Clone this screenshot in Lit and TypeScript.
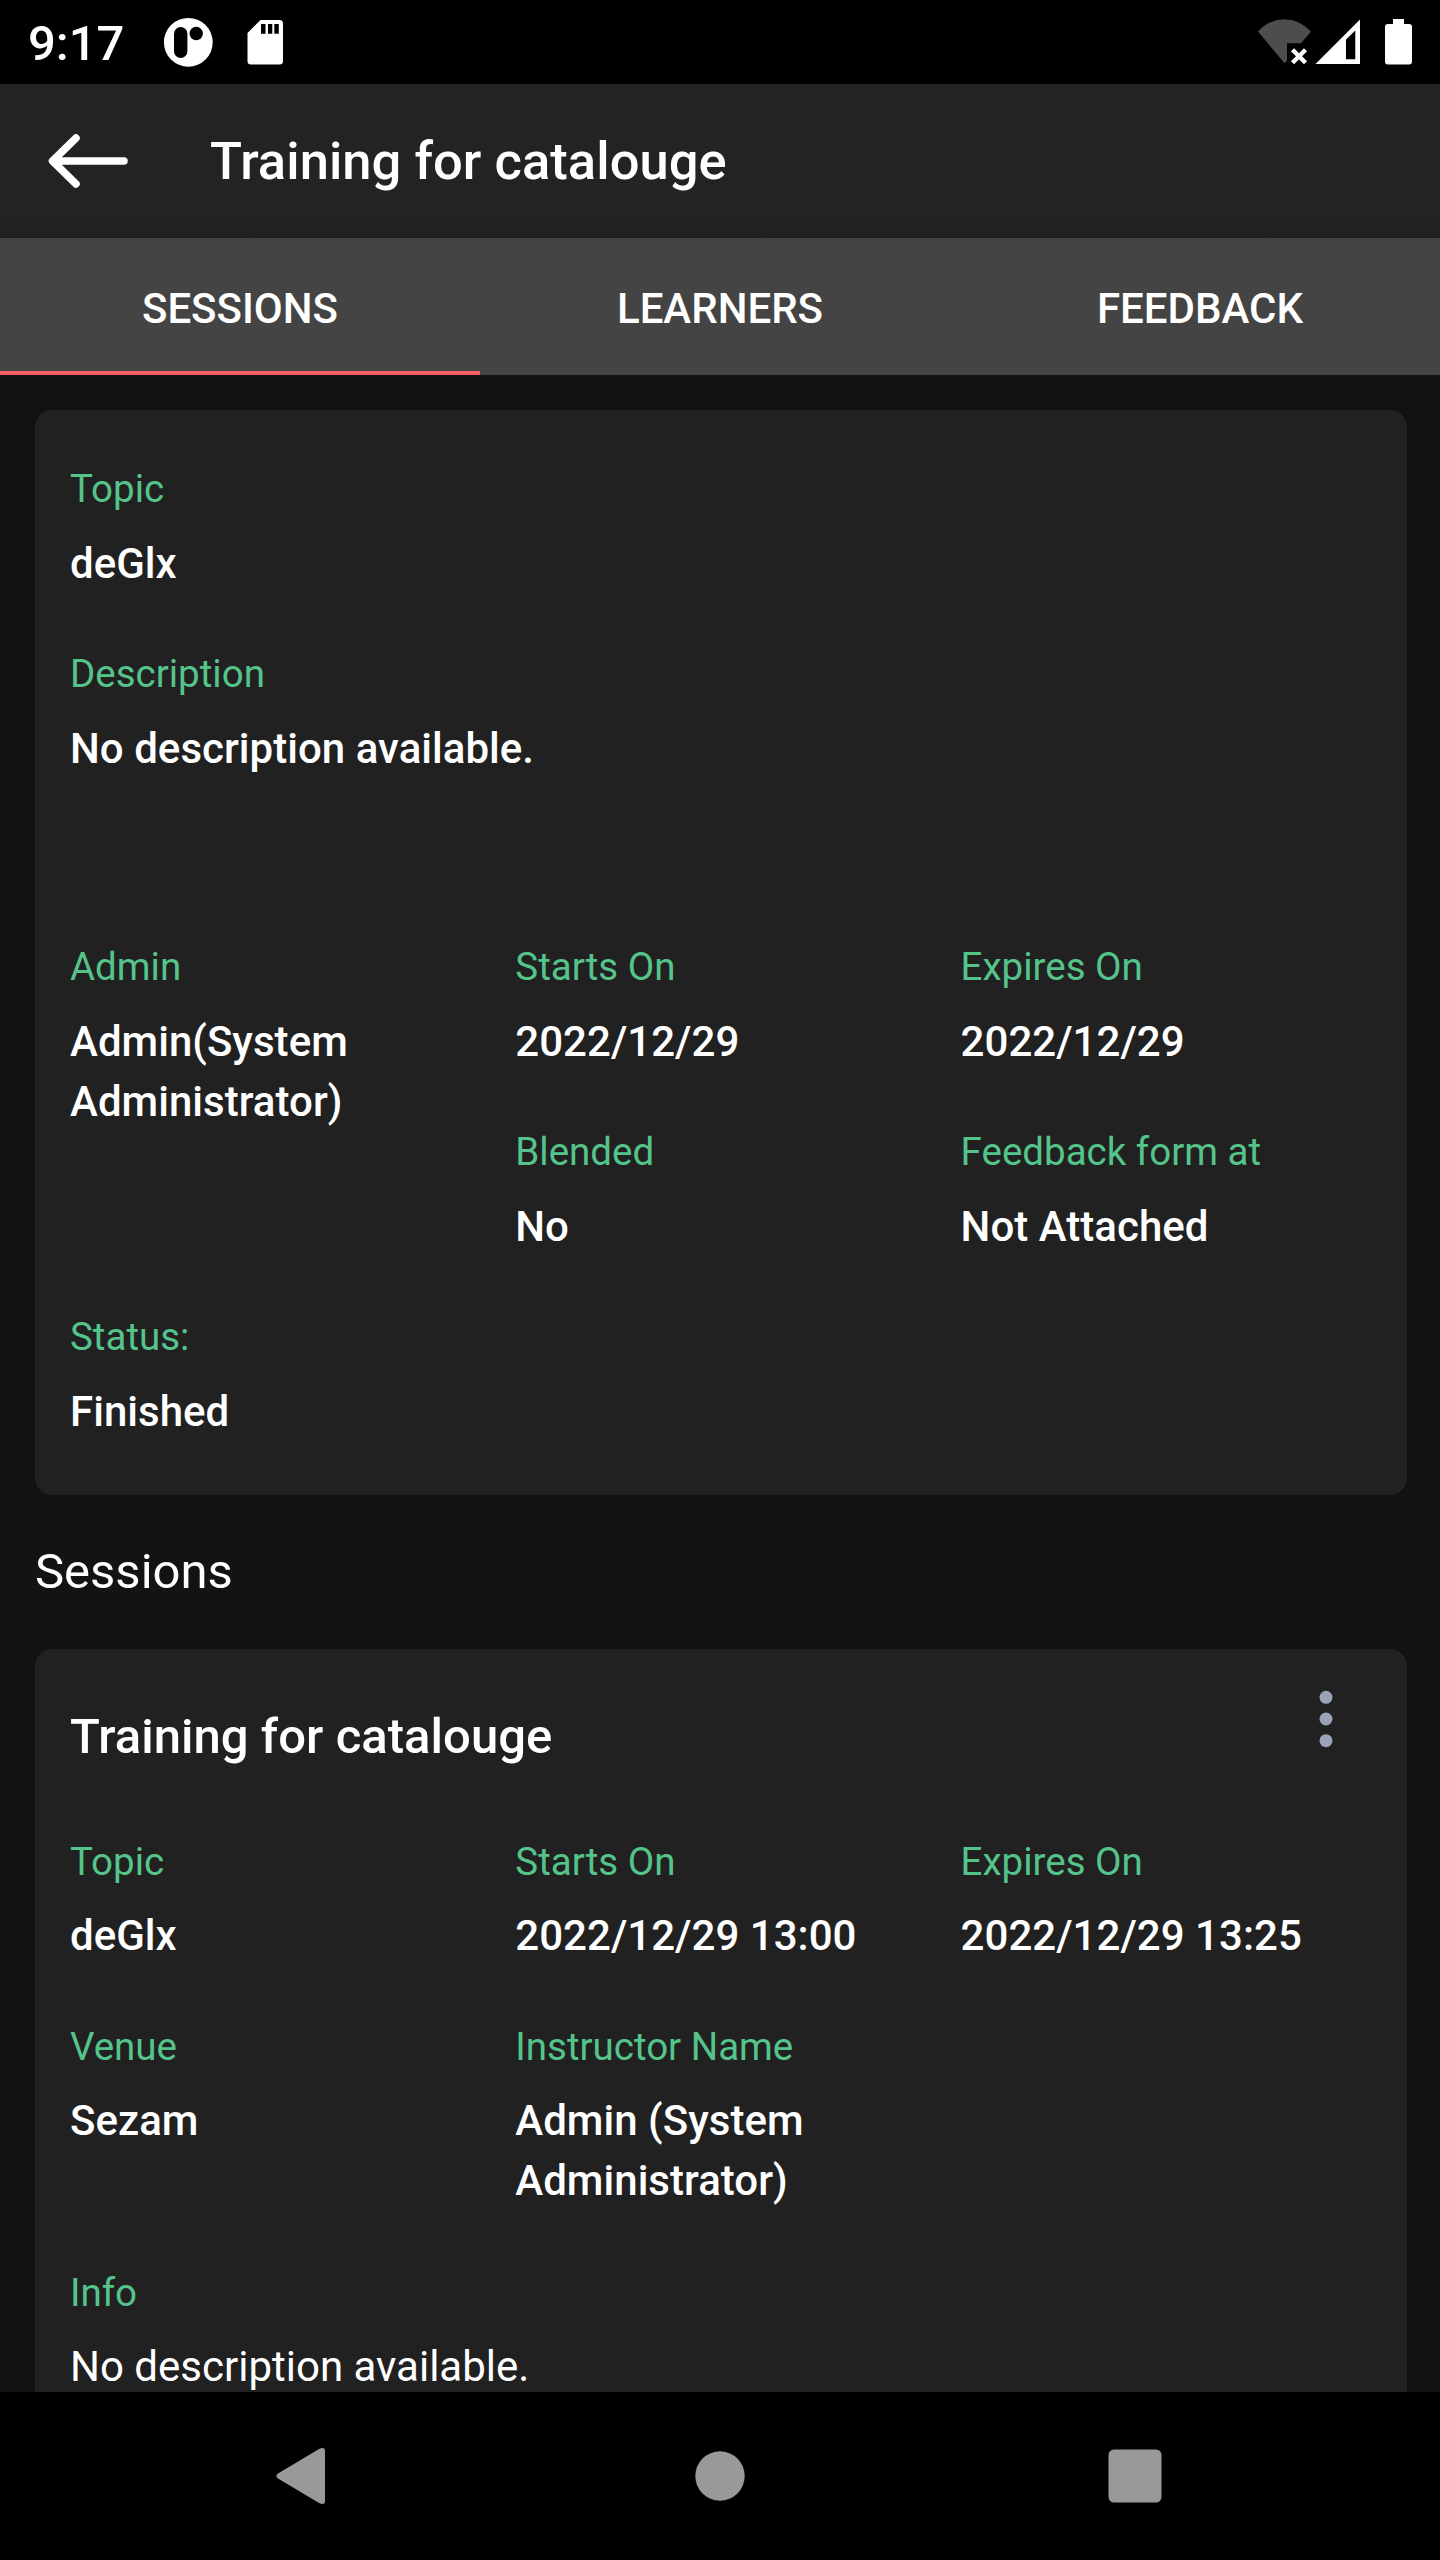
import { LitElement, html, css } from "lit";
import { customElement, property } from "lit/decorators.js";

@customElement("info-field")
class InfoField extends LitElement {
  @property() label = "";
  @property() value = "";
  @property({ type: Boolean, reflect: true }) plain = false;

  static styles = css`
    :host { display: block; padding-bottom: calc(65px - var(--field-gap, 14px)); }
    .label { color: #55c48b; font-size: 38.5px; line-height: 60px; white-space: nowrap; }
    .value { color: #fff; font-size: 42px; line-height: 60px; font-weight: 500; letter-spacing: 0.03px; margin-top: var(--field-gap, 14px); }
    :host([plain]) .value { font-weight: 400; letter-spacing: 0; }
  `;

  render() {
    return html`<div class="label">${this.label}</div><div class="value">${this.value}</div>`;
  }
}

@customElement("app-root")
class AppRoot extends LitElement {
  static styles = css`
    :host { display: block; font-family: Roboto, sans-serif; color: #fff; }
    * { box-sizing: border-box; }
    svg { display: block; flex: none; }
    .screen { width: 1440px; height: 2560px; background: #131313; display: flex; flex-direction: column; overflow: hidden; }
    .status { height: 84px; flex: none; background: #000; display: flex; justify-content: space-between; }
    .status-left { display: flex; padding-left: 28px; }
    .clock { width: 132px; font-size: 49px; font-weight: 500; line-height: 88px; }
    .header { height: 154px; flex: none; background: linear-gradient(#242321 0 130px, #21201e 154px); display: flex; align-items: center; padding-left: 44px; }
    .title { margin-left: 78px; font-size: 52.5px; font-weight: 500; line-height: 60px; letter-spacing: 0.04px; }
    .tabs { height: 137px; flex: none; background: #444; display: grid; grid-template-columns: repeat(3, 1fr); }
    .tab { display: flex; align-items: center; justify-content: center; font-size: 42px; font-weight: 500; padding-top: 8px; border-bottom: 4px solid transparent; }
    .tab.active { border-bottom-color: #f95f62; }
    .content { flex: 1; min-height: 0; overflow: hidden; padding: 35px 33px 0 35px; }
    .card { background: #212121; border-radius: 17px; box-shadow: 0 0 28px rgba(0, 0, 0, 0.2); padding: 49px 0 0 35px; }
    .summary { height: 1085px; --field-gap: 15px; }
    .session { height: 900px; }
    .spaced { padding-bottom: 158px; }
    .grid { display: grid; grid-template-columns: repeat(3, 445.3px); }
    .session .grid { padding-bottom: 1px; }
    .wide { grid-row: span 2; }
    .heading { font-size: 49px; line-height: 60px; margin: 47px 0; }
    .session-head { display: flex; justify-content: space-between; height: 134px; }
    .session-title { font-size: 49px; font-weight: 500; line-height: 78px; letter-spacing: 0.04px; }
    .more { margin: -8px 73px 0 0; }
    .nav { height: 168px; flex: none; background: #000; }
  `;

  render() {
    return html`
      <div class="screen">
        <div class="status">
          <div class="status-left">
            <div class="clock">9:17</div>
            <svg width="130" height="84" viewBox="160 0 130 84" fill="#fff">
              <circle cx="188.3" cy="42.3" r="24.4" />
              <rect x="174" y="27" width="13.4" height="31" rx="6.7" fill="#000" />
              <circle cx="196.2" cy="33.5" r="6.7" fill="#000" />
              <path d="M260.500 20H279.500Q283 20 283 23.500V61Q283 64.500 279.500 64.500H251Q247.500 64.500 247.500 61V33Z" />
              <path fill="#000" d="M261 24h4.500v9.700h-4.500zM268 24h4.300v9.700h-4.300zM274.300 24h4.500v9.700h-4.500z" />
            </svg>
          </div>
          <svg width="200" height="84" viewBox="1240 0 200 84" fill="#fff">
            <path fill="#4d4d4d" d="M1258 31.500Q1269.500 19.200 1284.500 19.200T1311 31.500L1301 43.300H1287V60.500L1284.500 63.300Z" />
            <path d="M1292.500 49.700L1305.500 62.700M1305.500 49.700L1292.500 62.700" stroke="#fff" stroke-width="4.400" />
            <path fill-rule="evenodd" d="M1360 19.500V64H1315.500ZM1346 39.500V59.300H1355.300V30.500Z" />
            <path d="M1393 19h11v5h5q3 0 3 3v34.500q0 3-3 3h-21q-3 0-3-3V27q0-3 3-3h5z" />
          </svg>
        </div>
        <div class="header">
          <svg width="88" height="60" viewBox="44 131 88 60" fill="none" stroke="#fff" stroke-width="7.500" stroke-linecap="round" stroke-linejoin="round">
            <path d="M76 138L52.500 161L76 184M54 161H124" />
          </svg>
          <div class="title">Training for catalouge</div>
        </div>
        <div class="tabs">
          <div class="tab active">SESSIONS</div>
          <div class="tab">LEARNERS</div>
          <div class="tab">FEEDBACK</div>
        </div>
        <div class="content">
          <div class="card summary">
            <info-field label="Topic" value="deGlx"></info-field>
            <info-field class="spaced" label="Description" value="No description available."></info-field>
            <div class="grid">
              <info-field class="wide" label="Admin" value="Admin(System Administrator)"></info-field>
              <info-field label="Starts On" value="2022/12/29"></info-field>
              <info-field label="Expires On" value="2022/12/29"></info-field>
              <info-field label="Blended" value="No"></info-field>
              <info-field label="Feedback form at" value="Not Attached"></info-field>
            </div>
            <info-field label="Status:" value="Finished"></info-field>
          </div>
          <div class="heading">Sessions</div>
          <div class="card session">
            <div class="session-head">
              <div class="session-title">Training for catalouge</div>
              <svg class="more" width="16" height="76" viewBox="1318 1690 16 76" fill="#9ba3b8">
                <circle cx="1326" cy="1697.300" r="6.500" />
                <circle cx="1326" cy="1719" r="6.500" />
                <circle cx="1326" cy="1740.700" r="6.500" />
              </svg>
            </div>
            <div class="grid">
              <info-field label="Topic" value="deGlx"></info-field>
              <info-field label="Starts On" value="2022/12/29 13:00"></info-field>
              <info-field label="Expires On" value="2022/12/29 13:25"></info-field>
              <info-field label="Venue" value="Sezam"></info-field>
              <info-field label="Instructor Name" value="Admin (System Administrator)"></info-field>
            </div>
            <info-field plain label="Info" value="No description available."></info-field>
          </div>
        </div>
        <div class="nav">
          <svg width="1440" height="168" viewBox="0 2392 1440 168" fill="#999">
            <path d="M278 2473.500L319.500 2448.800Q325 2446.500 325 2451V2501Q325 2505.500 319.500 2503.200L278 2478.500Q274.500 2476 278 2473.500Z" />
            <circle cx="720" cy="2476" r="24.700" />
            <rect x="1108.500" y="2449.500" width="53" height="53" rx="5.500" />
          </svg>
        </div>
      </div>
    `;
  }
}
